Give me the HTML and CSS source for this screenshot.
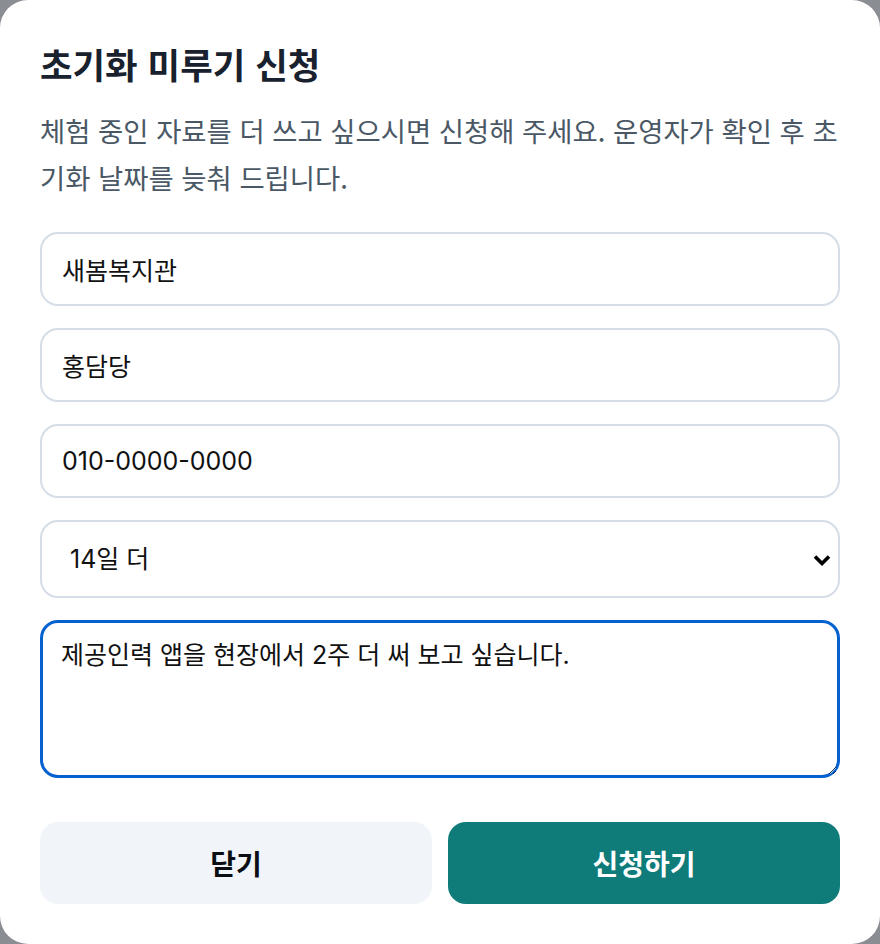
FILE: index.html
```html
<!DOCTYPE html>
<html lang="ko">
<head>
<meta charset="utf-8">
<title>초기화 미루기 신청</title>
<link rel="stylesheet" href="styles.css">
</head>
<body>
<div class="dialog" role="dialog" aria-labelledby="dlg-title">
  <h2 id="dlg-title" class="dialog-title">초기화 미루기 신청</h2>
  <p class="dialog-desc">체험 중인 자료를 더 쓰고 싶으시면 신청해 주세요. 운영자가 확인 후 초기화 날짜를 늦춰 드립니다.</p>
  <form class="form">
    <input class="field" type="text" value="새봄복지관">
    <input class="field" type="text" value="홍담당">
    <input class="field" type="tel" value="010-0000-0000">
    <div class="select-wrap">
      <select class="field field-select">
        <option>14일 더</option>
        <option>7일 더</option>
        <option>30일 더</option>
      </select>
      <svg class="select-chevron" width="18" height="12" viewBox="0 0 18 12" aria-hidden="true">
        <path d="M2 2.5 L9 9.5 L16 2.5" fill="none" stroke="#000" stroke-width="3.6" stroke-linejoin="miter"/>
      </svg>
    </div>
    <textarea class="field field-area is-focused">제공인력 앱을 현장에서 2주 더 써 보고 싶습니다.</textarea>
    <div class="actions">
      <button type="button" class="btn btn-secondary">닫기</button>
      <button type="button" class="btn btn-primary">신청하기</button>
    </div>
  </form>
</div>
</body>
</html>
```

FILE: styles.css
```css
html, body {
  margin: 0;
  padding: 0;
  height: 100%;
}

body {
  background: #8a8d92;
  font-family: "Noto Sans CJK KR", "Open Sans", sans-serif;
}

.dialog {
  box-sizing: border-box;
  width: 880px;
  height: 944px;
  background: #ffffff;
  border-radius: 28px;
  padding: 40px 40px 40px;
  display: flex;
  flex-direction: column;
}

.dialog-title {
  margin: 0;
  font-size: 35.4px;
  line-height: 48px;
  font-weight: 700;
  color: #18212d;
}

.dialog-desc {
  margin: 19px 0 0;
  font-size: 27.4px;
  line-height: 47px;
  color: #4a5866;
}

.form {
  margin: 31px 0 0;
  display: flex;
  flex-direction: column;
  gap: 22px;
}

.field {
  box-sizing: border-box;
  width: 100%;
  height: 74px;
  margin: 0;
  padding: 0 20px;
  border: 2px solid #d5dde6;
  border-radius: 18px;
  background: #ffffff;
  font-family: "Inter", "Noto Sans CJK KR", sans-serif;
  font-size: 25px;
  color: #111111;
  outline: none;
}

.select-wrap {
  position: relative;
}

.field-select {
  display: block;
  height: 78px;
  padding: 0 48px 0 28px;
  -webkit-appearance: none;
  appearance: none;
  color: #111111;
}

.select-chevron {
  position: absolute;
  right: 9px;
  top: 34px;
  pointer-events: none;
}

.field-area {
  height: 158px;
  padding: 14px 18px;
  line-height: 1.45;
  resize: vertical;
}

.field-area.is-focused,
.field:focus {
  border: 3px solid #0560d0;
}

.actions {
  margin-top: 22px;
  display: grid;
  grid-template-columns: 1fr 1fr;
  gap: 16px;
}

.btn {
  height: 82px;
  border: none;
  border-radius: 18px;
  font-family: "Noto Sans CJK KR", sans-serif;
  font-size: 28px;
  font-weight: 700;
  cursor: pointer;
}

.btn-secondary {
  background: #f1f5f9;
  color: #0b0f14;
}

.btn-primary {
  background: #0f7c7a;
  color: #ffffff;
}
```
